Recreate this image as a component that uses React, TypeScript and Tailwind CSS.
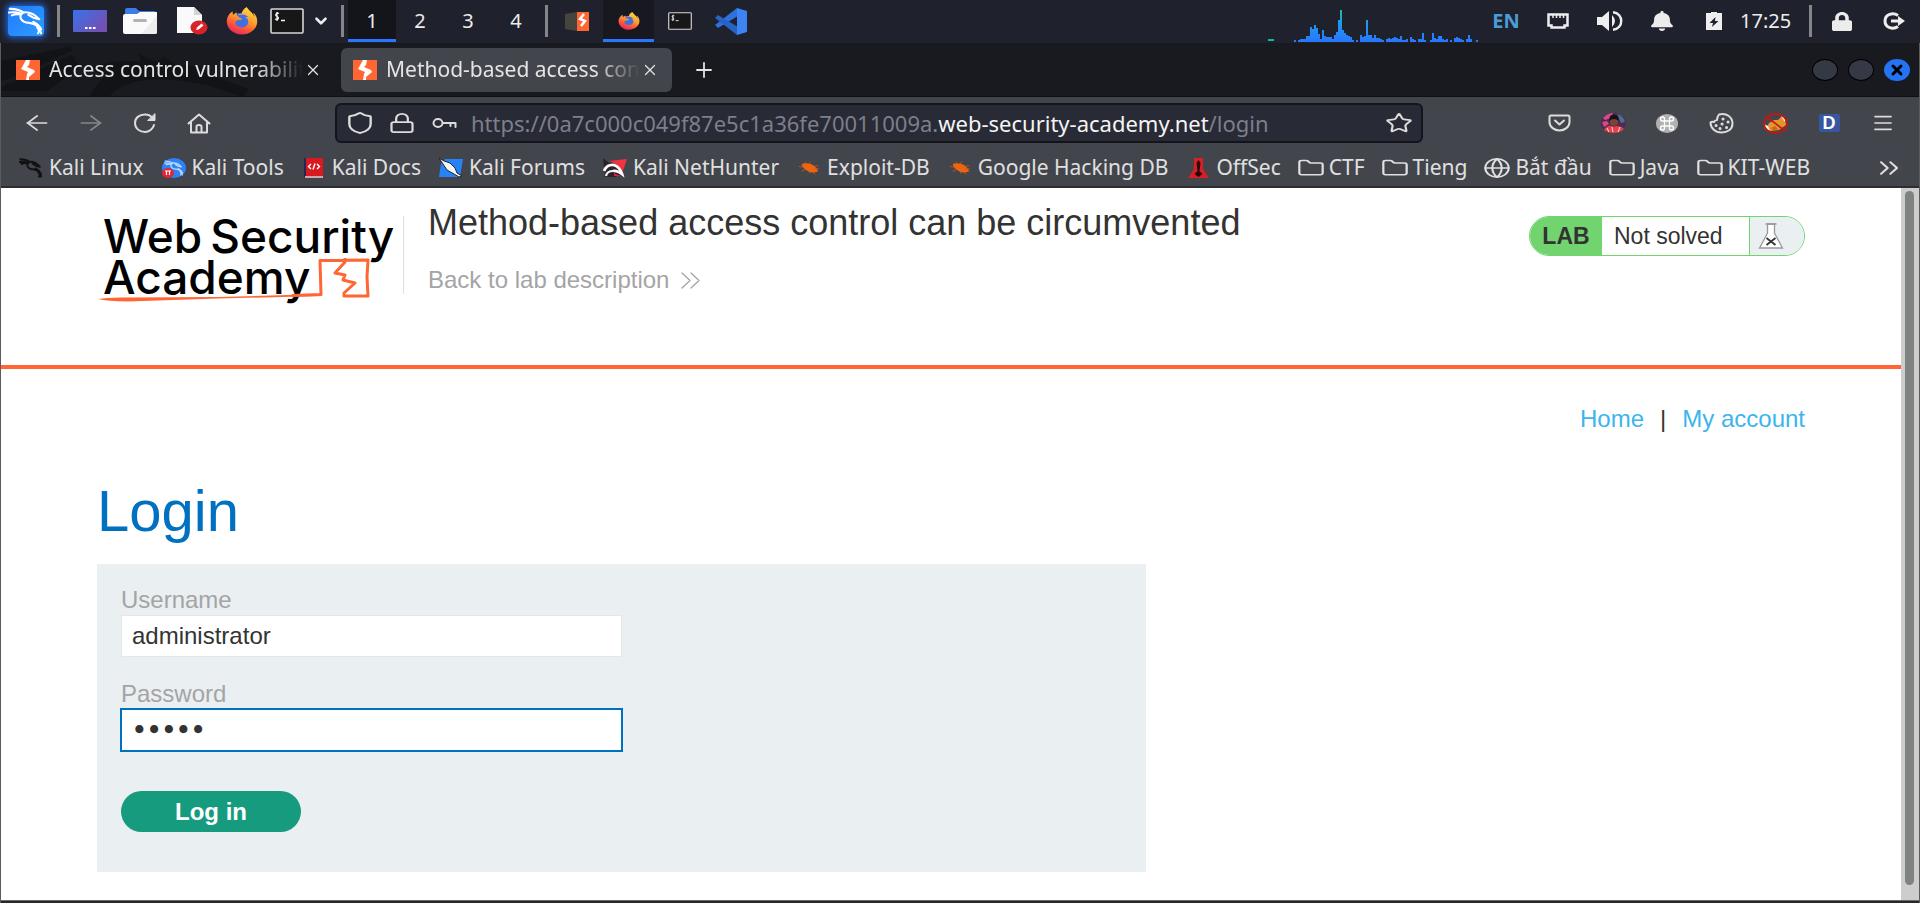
import type { ReactNode } from "react";
import { Shield, Lock, Star, Globe, Folder, ChevronsRight, ChevronDown, ArrowLeft, ArrowRight, Menu, Plus, X } from "lucide-react";
import { FaFirefoxBrowser, FaBell, FaLock } from "react-icons/fa";

const stroke = { fill: "none", stroke: "currentColor", strokeLinecap: "round", strokeLinejoin: "round" } as const;

function Defs() {
  return (
    <svg className="absolute h-0 w-0" aria-hidden="true">
      <defs>
        <linearGradient id="fox" x1="0.8" y1="0" x2="0.3" y2="1">
          <stop offset="0" stopColor="#ffe14a" />
          <stop offset="0.45" stopColor="#ff9a2e" />
          <stop offset="0.75" stopColor="#ff4f3a" />
          <stop offset="1" stopColor="#e02568" />
        </linearGradient>
        <linearGradient id="desk" x1="0" y1="0" x2="1" y2="0.6">
          <stop offset="0" stopColor="#3873e8" />
          <stop offset="1" stopColor="#7350b4" />
        </linearGradient>
        <linearGradient id="cpu" x1="0" y1="0" x2="0" y2="1">
          <stop offset="0" stopColor="#22b8b0" />
          <stop offset="0.4" stopColor="#1e9af0" />
          <stop offset="1" stopColor="#2777ff" />
        </linearGradient>
      </defs>
    </svg>
  );
}

function Firefox({ className }: { className: string }) {
  return (
    <span className={`relative flex items-center justify-center ${className}`}>
      <span className="absolute h-3/5 w-3/5 rounded-full bg-[#3f6fe0]" />
      <FaFirefoxBrowser fill="url(#fox)" preserveAspectRatio="none" className="relative h-full w-full" />
    </span>
  );
}

function Dragon({ className, weight }: { className: string; weight: number }) {
  return (
    <svg viewBox="0 0 37 30" preserveAspectRatio="none" className={className} {...stroke} strokeWidth={weight} aria-hidden="true">
      <path d="M2 2q9 0 14 4-4 2-3 6 2 5 9 5 10 1 12 11" />
      <path d="M1 6q7-1 12 1M4 9q4-2 9-1M15 6q9-2 17 7l-6-1.500-5-3M26 16q6 3 8 8M30 22q3 3 1 6" />
    </svg>
  );
}

function Bolt({ className }: { className: string }) {
  return (
    <svg viewBox="0 0 24 20" preserveAspectRatio="none" className={className} aria-hidden="true">
      <rect width="24" height="20" fill="#ff6633" />
      <path d="M10 0h4l-1 5-2 2 7 3 1 2-6 5v3h-3l1-6 1-2-7-3z" fill="#fff" />
    </svg>
  );
}

function TerminalIcon({ className }: { className: string }) {
  return (
    <svg viewBox="0 0 34 26" preserveAspectRatio="none" className={className} aria-hidden="true">
      <rect x="1" y="1" width="32" height="24" rx="1" fill="#171717" stroke="#d6d6d6" strokeWidth="1.6" />
      <path d="M9 5.500c-3-1-4.500 2-2 3s1.500 4-2 2.500M7 4v9M11 12.500h4" stroke="#f2f2f2" strokeWidth="1.300" fill="none" />
    </svg>
  );
}

const cpuBars = [
  1, 0, 1, 2, 2, 2, 5, 5, 14, 12, 16, 13, 7, 2, 11, 5, 4, 4, 4, 2, 6, 9, 21, 31, 11, 8, 6, 5, 4, 1, 0, 1, 0, 6, 4, 5, 21, 6, 6, 3, 6, 3, 3, 2, 1,
  0, 2, 3, 2, 3, 4, 3, 2, 5, 1, 1, 2, 0, 4, 2, 1, 0, 2, 2, 8, 1, 0, 0, 1, 8, 3, 2, 5, 5, 2, 1, 2, 0, 1, 0, 3, 4, 3, 2, 1, 0, 2, 6, 2, 0, 0, 1,
];

function CpuGraph() {
  return (
    <svg width="213" height="42" viewBox="0 0 213 42" className="shrink-0" aria-hidden="true">
      <rect x="1" y="39" width="6" height="2" fill="#14b79f" />
      <path d={cpuBars.map((h, i) => (h ? `M${27 + i * 2} 42v-${h + 1}h2v${h + 1}z` : "")).join("")} fill="url(#cpu)" />
    </svg>
  );
}

function Slot({ label, className, children }: { label: string; className: string; children: ReactNode }) {
  return (
    <button aria-label={label} className={`flex shrink-0 items-center justify-center ${className}`}>
      {children}
    </button>
  );
}

const Separator = () => <span className="h-8 w-[3px] shrink-0 bg-[#85868a]" />;

function Panel() {
  return (
    <div className="flex h-[43px] shrink-0 items-center bg-[#1f212c] pb-px text-[#ececec]">
      <Slot label="Applications" className="h-full w-[52px]">
        <span className="flex h-[30px] w-9 items-center justify-center rounded-sm bg-gradient-to-br from-[#2478ff] to-[#2d9dff] shadow-[0_0_6px_2px_#1f62d0]">
          <Dragon weight={2.2} className="h-7 w-9 text-white" />
        </span>
      </Slot>
      <div className="flex w-[13px] shrink-0 pl-[5px]"><Separator /></div>
      <Slot label="Show desktop" className="h-full w-[50px]">
        <svg width="34" height="22" viewBox="0 0 34 22" aria-hidden="true">
          <rect width="34" height="22" rx="1" fill="url(#desk)" />
          <path d="M12 18h2.500M16 18h2.500M20 18h2.500" stroke="#fff" strokeWidth="2" />
        </svg>
      </Slot>
      <Slot label="Files" className="h-full w-[50px]">
        <svg width="34" height="26" viewBox="0 0 34 26" aria-hidden="true">
          <path d="M2 2q0-2 2-2h9l3 3h15q2 0 2 2v6H2z" fill="#3b7be8" />
          <path d="M0 8q0-2 2-2h12l3-2h17v20q0 2-2 2H2q-2 0-2-2z" fill="#fafafa" />
          <path d="M34 8 18 26h14q2 0 2-2z" fill="#ededed" />
          <rect x="10" y="11" width="14" height="3" rx="1.500" fill="#b3b3b3" />
        </svg>
      </Slot>
      <Slot label="Text editor" className="h-full w-[54px]">
        <svg width="32" height="28" viewBox="0 0 32 28" aria-hidden="true">
          <path d="M1 0h17l8 8v18H1z" fill="#fafafa" />
          <path d="M18 0v8h8z" fill="#d4d4d4" />
          <ellipse cx="23" cy="20.500" rx="8.500" ry="7" fill="#d8232a" />
          <path d="m20 23 1-2.500 4.500-4 2 2-5 4z" fill="#fff" />
        </svg>
      </Slot>
      <Slot label="Firefox" className="h-full w-[46px]"><Firefox className="h-7 w-8" /></Slot>
      <Slot label="Terminal" className="h-full w-[44px]"><TerminalIcon className="h-[26px] w-[34px]" /></Slot>
      <Slot label="More launchers" className="h-full w-[24px]"><ChevronDown size={18} strokeWidth={3.5} /></Slot>
      <div className="flex w-[15px] shrink-0 pl-[8px]"><Separator /></div>
      <nav aria-label="Workspaces" className="flex h-full font-[Noto_Sans] text-[20px]">
        <button className="h-full w-12 border-b-3 border-[#2777ff] bg-[#14151b] pt-[3px]">1</button>
        <button className="h-full w-12">2</button>
        <button className="h-full w-12">3</button>
        <button className="h-full w-12">4</button>
      </nav>
      <div className="flex w-[13px] shrink-0 pl-[5px]"><Separator /></div>
      <Slot label="Burp Suite" className="h-full w-[50px]">
        <svg width="24" height="19" viewBox="0 0 24 19" className="ml-[-2px]" aria-hidden="true">
          <path d="M0 2 12 0v19L0 17z" fill="#47443f" />
          <path d="M12 0h12v19H12z" fill="#ff6633" />
          <path d="M19 2l-4 5 5 2-4 5" stroke="#fff" strokeWidth="2.500" fill="none" />
        </svg>
      </Slot>
      <Slot label="Firefox window" className="h-full w-[51px] border-b-3 border-[#2777ff] bg-[#181920] pt-[3px]"><Firefox className="h-[18px] w-[22px]" /></Slot>
      <Slot label="Terminal window" className="h-full w-[51px]"><TerminalIcon className="h-[18px] w-6" /></Slot>
      <Slot label="Code window" className="h-full w-[51px]">
        <svg width="33" height="27" viewBox="0 0 33 27" aria-hidden="true">
          <path d="M23 0 1 17l3 3L24 8z" fill="#2c71dd" />
          <path d="M23 27 1 10l3-3 20 12z" fill="#2862c4" />
          <path d="M23 0l10 3v21l-10 3z" fill="#3c83f4" />
        </svg>
      </Slot>
      <div className="flex-1" />
      <CpuGraph />
      <Slot label="Input language" className="h-full w-[52px] font-[Noto_Sans] text-[20px] font-bold text-[#4a9dd6]">EN</Slot>
      <Slot label="Network" className="h-full w-[52px]">
        <svg width="22" height="16" viewBox="0 0 22 16" aria-hidden="true">
          <path d="M1.500 1.500h19v11h-3v2h-13v-2h-3z" fill="none" stroke="#eee" strokeWidth="2.500" />
          <path d="M6 2v3M9.500 2v3M13 2v3M16.500 2v3" stroke="#eee" strokeWidth="1.500" />
        </svg>
      </Slot>
      <Slot label="Volume" className="h-full w-[52px]">
        <svg width="26" height="20" viewBox="0 0 26 20" aria-hidden="true">
          <path d="M0 6h5l7-6v20l-7-6H0z" fill="#eee" />
          <path d="M15 4q6 6 0 12z" fill="#eee" />
          <path d="M16 1.200c11 1 11 16.600 0 17.600" stroke="#eee" strokeWidth="2.400" fill="none" />
        </svg>
      </Slot>
      <Slot label="Notifications" className="h-full w-[52px]"><FaBell preserveAspectRatio="none" className="h-5 w-[22px]" /></Slot>
      <Slot label="Battery" className="h-full w-[52px]">
        <svg width="16" height="18" viewBox="0 0 16 18" aria-hidden="true">
          <path d="M0 1h5V0h6v1h5v17H0z" fill="#eee" />
          <path d="M9.500 5 3.500 11H7l-1 4 6.500-6H9z" fill="#1f212c" />
        </svg>
      </Slot>
      <span className="flex w-[69px] shrink-0 font-[Noto_Sans] text-[20px]">17:25</span>
      <Separator />
      <Slot label="Lock screen" className="h-full w-[60px]"><FaLock preserveAspectRatio="none" className="h-[19px] w-5" /></Slot>
      <Slot label="Log out" className="h-full w-[48px] pr-1">
        <svg width="23" height="18" viewBox="0 0 23 18" aria-hidden="true">
          <path d="M15 3.500C10 0 2 2 2 9s8 9 13 5.500" fill="none" stroke="#eee" strokeWidth="3" />
          <path d="M8 7.500h7V4l7 5-7 5v-3.500H8z" fill="#eee" />
        </svg>
      </Slot>
    </div>
  );
}

function Tab({ title, active = false }: { title: string; active?: boolean }) {
  return (
    <div className={`flex h-11 w-[331px] shrink-0 items-center rounded-md pl-3 ${active ? "bg-[#43454c]" : ""}`}>
      <Bolt className="h-5 w-6 shrink-0" />
      <span className="ml-[9px] w-[254px] overflow-hidden whitespace-nowrap text-[21px] [mask-image:linear-gradient(to_right,#000_82%,transparent)]">{title}</span>
      <button aria-label={`Close ${title}`} className="flex h-6 w-5 items-center justify-center"><X size={18} strokeWidth={1.6} /></button>
    </div>
  );
}

function TabBar() {
  return (
    <div className="relative flex h-[54px] shrink-0 items-center border-b border-[#101115] bg-[#191a1f] text-[#e4e4e4]">
      <svg viewBox="0 0 260 53" className="absolute left-0 top-0 h-[53px] w-[260px]" fill="#121317" aria-hidden="true">
        <path d="M0 18 68 4l4 3-50 24-22 7zM0 44l70-32 10 12-34 24H0zM62 1c10 8 12 20 30 22 18-4 26-6 48-4l-2-8 18 8 6-5 14 8 22 2 22 12 28 10-6 8-36-12c-40-8-80-10-98 12H88c6-10 10-16 18-22-12-2-26-10-44-31z" />
      </svg>
      <div className="relative flex flex-1 items-center gap-[6px] pl-[3px]">
        <Tab title="Access control vulnerabilities" />
        <Tab title="Method-based access control" active />
        <button aria-label="New tab" className="flex w-13 items-center justify-center"><Plus size={24} strokeWidth={1.8} /></button>
      </div>
      <div className="flex gap-[10px] pr-[9px]">
        <button aria-label="Minimize" className="h-[22px] w-[26px] rounded-[50%] border border-black bg-[#353845]" />
        <button aria-label="Maximize" className="h-[22px] w-[26px] rounded-[50%] border border-black bg-[#353845]" />
        <button aria-label="Close window" className="flex h-[22px] w-[26px] items-center justify-center rounded-[50%] bg-[#2573f5] text-black"><X size={16} strokeWidth={4.5} /></button>
      </div>
    </div>
  );
}

function Toolbar() {
  return (
    <div className="flex h-[52px] shrink-0 items-center px-[9px] text-[#dcdcdc]">
      <Slot label="Back" className="h-10 w-[54px]"><ArrowLeft preserveAspectRatio="none" className="h-6 w-8" strokeWidth={1.7} /></Slot>
      <Slot label="Forward" className="h-10 w-[54px] text-[#85868a]"><ArrowRight preserveAspectRatio="none" className="h-6 w-8" strokeWidth={1.7} /></Slot>
      <Slot label="Reload" className="h-10 w-[54px]">
        <svg width="24" height="20" viewBox="0 0 24 20" {...stroke} strokeWidth="2" aria-hidden="true">
          <path d="M21 12c-1 4-5 7-9 7-6 0-10-4-10-9s4-8.500 10-8.500c3 0 5.500 1 7 3" />
          <path d="M22 1v6.500h-7z" fill="currentColor" strokeWidth="1" />
        </svg>
      </Slot>
      <Slot label="Home" className="h-10 w-[54px]">
        <svg width="24" height="21" viewBox="0 0 24 21" {...stroke} strokeWidth="2" aria-hidden="true">
          <path d="M1.500 10.500 12 1.500l10.500 9M4 9v10.500h16V9M9.500 19v-5.500q0-1.500 2.500-1.500t2.500 1.500V19" />
        </svg>
      </Slot>
      <div className="mx-[109px] flex h-10 min-w-0 flex-1 items-center rounded-md border-2 border-[#14151b] bg-[#282a36] pl-[7px] pr-2">
        <Shield preserveAspectRatio="none" className="h-6 w-8 shrink-0" strokeWidth={1.8} />
        <Lock preserveAspectRatio="none" className="ml-3 h-[22px] w-7 shrink-0" strokeWidth={1.9} />
        <svg width="25" height="14" viewBox="0 0 25 14" className="ml-4 shrink-0" {...stroke} strokeWidth="2" aria-hidden="true">
          <ellipse cx="6" cy="7" rx="4.500" ry="4" />
          <path d="M11 7h12.500v4M18.500 7v3" />
        </svg>
        <div className="ml-[14px] min-w-0 flex-1 truncate text-[22px] text-[#7d7f89]">
          https://0a7c000c049f87e5c1a36fe70011009a.<span className="text-[#f4f4f4]">web-security-academy.net</span>/login
        </div>
        <button aria-label="Bookmark this page" className="shrink-0"><Star preserveAspectRatio="none" className="h-[22px] w-7" strokeWidth={1.9} /></button>
      </div>
      <Slot label="Pocket" className="h-10 w-[54px]">
        <svg width="23" height="18" viewBox="0 0 23 18" {...stroke} strokeWidth="2" aria-hidden="true">
          <path d="M3 1.500h17q1.500 0 1.500 1.500v5c0 5-5 8.500-10 8.500s-10-3.500-10-8.500V3q0-1.500 1.500-1.500zM7 6.500l4.500 4 4.500-4" />
        </svg>
      </Slot>
      <Slot label="Profile" className="h-10 w-[54px]">
        <svg width="25" height="20" viewBox="0 0 25 20" aria-hidden="true">
          <ellipse cx="12.500" cy="10" rx="12.500" ry="10" fill="#4c2a55" />
          <path d="M2 5q5-5 10-5l-2 5-6 2zM1 9l5-1 2 3-5 3z" fill="#d64a86" />
          <path d="M16 1q7 2 8 8l-4 1z" fill="#4a6f8f" />
          <ellipse cx="13" cy="9" rx="4" ry="4" fill="#7a4436" />
          <path d="M8 8q5-4 10 0l-1-5q-4-3-8 0z" fill="#1c1116" />
          <path d="M3 17q3-5 8-4l2 1 2-1q6 0 8 3-4 4-10 4T3 17z" fill="#e8404a" />
          <path d="M6 15l2 4M11 14l1 5M19 14l-2 5" stroke="#ffd9dc" />
        </svg>
      </Slot>
      <Slot label="Shortcuts extension" className="h-10 w-[54px]">
        <svg width="22" height="19" viewBox="0 0 22 19" aria-hidden="true">
          <ellipse cx="11" cy="9.500" rx="11" ry="9.500" fill="#b1b1b1" />
          <path d="M8.500 7h5v5h-5zM8.500 7H6.500A2 2 0 1 1 8.500 5zM13.500 7V5a2 2 0 1 1 2 2zM13.500 12h2a2 2 0 1 1-2 2zM8.500 12v2a2 2 0 1 1-2-2z" fill="none" stroke="#fff" strokeWidth="1.300" />
        </svg>
      </Slot>
      <Slot label="Cookie editor" className="h-10 w-[54px]">
        <svg width="25" height="21" viewBox="0 0 25 21" {...stroke} strokeWidth="2" aria-hidden="true">
          <path d="M10 1.500c8-2 13.500 3 13.500 9s-5 9-11 9-11-4-11-10q1-1 3.500-.5 1-2 3-2 0-3 2-5.500z" />
          <path d="M14 6h.1M19 9h.1M17.500 14.500h.1M7 12.500h.1M13 11h.1M11 15.500h.1" strokeWidth="3" />
        </svg>
      </Slot>
      <Slot label="Proxy switcher" className="h-10 w-[54px]">
        <svg width="25" height="21" viewBox="0 0 25 21" aria-hidden="true">
          <path d="M3 16 6 10l5-3h4l3-3 4 1 1 7-7 5-9 1z" fill="#e8942c" />
          <path d="M18 3l4 1v5zM1 11l4 2 2 5-5-2z" fill="#fff" />
          <path d="M8 15l4-2 3 3-4 2z" fill="#c9690f" />
          <ellipse cx="12.500" cy="10.500" rx="11.500" ry="9.500" fill="none" stroke="#c01818" strokeWidth="1.800" />
          <path d="M4 4l17 13" stroke="#c01818" strokeWidth="1.600" />
        </svg>
      </Slot>
      <Slot label="D extension" className="h-10 w-[54px]">
        <span className="flex h-[18px] w-[21px] items-center justify-center rounded-xs bg-[#37579e] font-[Liberation_Sans] text-[18px] font-bold leading-none text-white">D</span>
      </Slot>
      <Slot label="Menu" className="h-10 w-[54px]"><Menu preserveAspectRatio="none" className="h-[22px] w-6" strokeWidth={1.8} /></Slot>
    </div>
  );
}

const bug = (
  <svg width="22" height="16" viewBox="0 0 24 20" preserveAspectRatio="none" aria-hidden="true">
    <path d="M4 5q5-2 10 0 6 3 8 9-6 3-11 0-6-3-7-9z" fill="#ee6511" />
    <path d="M8 5V2M12 5l2-3M6 9l-5-1M8 12l-4 2M17 8l5-1M18 11l5 0M12 14l1 3M16 15l3 3" stroke="#c6571a" strokeWidth="1" />
  </svg>
);
const folder = <Folder preserveAspectRatio="none" className="h-5 w-7 shrink-0" strokeWidth={1.9} />;

const bookmarks: { label: string; icon: ReactNode }[] = [
  { label: "Kali Linux", icon: <Dragon weight={3} className="h-5 w-6 text-[#111114]" /> },
  {
    label: "Kali Tools",
    icon: (
      <span className="relative flex h-5 w-6 items-center justify-center rounded-[50%] bg-[#2b83f6]">
        <Dragon weight={2.4} className="h-4 w-5 text-[#b9d6ff]" />
        <svg width="12" height="10" viewBox="0 0 12 10" className="absolute bottom-0 left-0" aria-hidden="true">
          <ellipse cx="6" cy="5" rx="6" ry="5" fill="#e32636" />
          <path d="M3 3h6M4.500 3v4M7.500 3v4" stroke="#fff" strokeWidth="1.200" />
        </svg>
      </span>
    ),
  },
  {
    label: "Kali Docs",
    icon: (
      <svg width="20" height="20" viewBox="0 0 20 20" aria-hidden="true">
        <path d="M0 0h4v20H0z" fill="#22284f" />
        <path d="M2 0h17v18H2z" fill="#d91920" />
        <path d="M1 18h18v2H1z" fill="#c9a9a9" />
        <path d="M7 6 4.500 8.500 7 11M13 6l2.500 2.500L13 11M11 5.500 9 11.500" stroke="#fff" strokeWidth="1.400" fill="none" />
      </svg>
    ),
  },
  {
    label: "Kali Forums",
    icon: (
      <svg width="24" height="20" viewBox="0 0 24 20" aria-hidden="true">
        <path d="M6 1h18l-3 18H0L2 6z" fill="#2583f7" />
        <path d="M0 0l5 3 6 2 5 5 2 5 5 3-3 1-5-3-7-4-4-6z" fill="#f5f5f5" stroke="#15171c" strokeWidth="0.900" />
      </svg>
    ),
  },
  {
    label: "Kali NetHunter",
    icon: (
      <svg width="24" height="20" viewBox="0 0 24 20" aria-hidden="true">
        <path d="M0 0l6 5 6-1 6 12-6 3H2z" fill="#2a2228" />
        <path d="M6 3 24 1l-4 12-3-3-6-5z" fill="#f0333c" />
        <path d="M11 15l6 3h-6z" fill="#e01f4c" />
        <path d="M1 13q3-7 10-6 6 2 8 9-5-4-9-3" fill="none" stroke="#fff" strokeWidth="2.800" />
        <path d="M3 18q1-5 7-5" fill="none" stroke="#f4f4f4" strokeWidth="2.200" />
      </svg>
    ),
  },
  { label: "Exploit-DB", icon: bug },
  { label: "Google Hacking DB", icon: bug },
  {
    label: "OffSec",
    icon: (
      <svg width="21" height="20" viewBox="0 0 21 20" aria-hidden="true">
        <path d="M6 0h9v11l6 9H0l6-9z" fill="#d81e26" />
        <path d="M10.500 2l2 3-1 8 3 3-4 3-4-3 3-3-1-8z" fill="#2a0608" />
      </svg>
    ),
  },
  { label: "CTF", icon: folder },
  { label: "Tieng", icon: folder },
  { label: "Bắt đầu", icon: <Globe preserveAspectRatio="none" className="h-[22px] w-7 shrink-0" strokeWidth={1.8} /> },
  { label: "Java", icon: folder },
  { label: "KIT-WEB", icon: folder },
];

function BookmarksBar() {
  return (
    <div className="flex h-[39px] shrink-0 items-center border-b-2 border-[#2c2d31] pl-[18px] pr-[14px] text-[21px] text-[#e0e0e0]">
      <div className="flex min-w-0 flex-1 items-center gap-[18px]">
        {bookmarks.map((b) => (
          <a key={b.label} href="#" className="flex shrink-0 items-center gap-[6px] whitespace-nowrap">
            <span className="flex w-6 shrink-0 items-center justify-center">{b.icon}</span>
            {b.label}
          </a>
        ))}
      </div>
      <button aria-label="More bookmarks"><ChevronsRight preserveAspectRatio="none" className="h-7 w-8" strokeWidth={1.6} /></button>
    </div>
  );
}

function AcademyLogo() {
  return (
    <a href="#" aria-label="Web Security Academy" className="relative block w-[307px] shrink-0 border-r border-[#dedede]">
      <div className="pl-[6px] font-[Inter] text-[46px] font-medium leading-[41px] text-black">
        <div className="flex gap-2">
          <span>Web</span>
          <span>Security</span>
        </div>
        <div>Academy</div>
      </div>
      <svg width="300" height="90" viewBox="0 0 300 90" className="absolute left-0 top-0" fill="none" stroke="#ff6633" aria-hidden="true">
        <path d="M1 83q10-2 30-1.500l90-.5 103-3V80l-103 2.500-90 3Q10 85 1 83z" fill="#ff6633" stroke="none" />
        <path d="M195 79.500l29-1-1-34 48-.5-1 17 1 19h-24v-3l11-10-12-3 2-5-10-2 10-11v-4" strokeWidth="3" strokeLinejoin="round" />
      </svg>
    </a>
  );
}

function LabBadge() {
  return (
    <div className="flex h-10 w-[276px] shrink-0 overflow-hidden rounded-full border border-[#72d46f] text-[23px]">
      <span className="flex w-[72px] items-center justify-center bg-[#72d46f] font-bold text-[#333332]">LAB</span>
      <span className="flex flex-1 items-center border-r border-[#72d46f] pl-3">Not solved</span>
      <span className="flex w-[54px] items-center bg-[#eaeff2] pl-2">
        <svg width="26" height="26" viewBox="0 0 26 26" aria-hidden="true">
          <path d="M9.500 1v9L1.500 25h23l-8-15V1z" fill="#fff" stroke="#999" strokeWidth="1.300" />
          <path d="M7.500 1h11" stroke="#999" strokeWidth="1.500" />
          <path d="M8.500 15l9 7M17.500 15l-9 7" stroke="#333332" strokeWidth="1.800" />
        </svg>
      </span>
    </div>
  );
}

function LabPage() {
  return (
    <div className="flex flex-1 bg-white font-[Liberation_Sans] text-[#333332]">
      <main className="min-w-0 flex-1">
        <header className="flex h-[181px] border-b-4 border-[#ff6633] px-24 pt-4">
          <div className="mt-3 flex h-[78px]"><AcademyLogo /></div>
          <div className="ml-6 flex-1">
            <h1 className="text-[36px] leading-[38px]">Method-based access control can be circumvented</h1>
            <a href="#" className="mt-6 flex items-center gap-3 text-[24px] leading-7 text-[#a4a4a6]">
              Back to lab description
              <svg width="20" height="17" viewBox="0 0 20 17" {...stroke} strokeWidth="1.300" aria-hidden="true">
                <path d="M1 1l8 7.500L1 16M10 1l8 7.500L10 16" />
              </svg>
            </a>
          </div>
          <div className="mt-3"><LabBadge /></div>
        </header>
        <div className="px-24">
          <nav className="flex justify-end gap-4 pt-9 text-[24px] leading-7">
            <a href="#" className="text-[#3bb5ec]">Home</a>
            <span>|</span>
            <a href="#" className="text-[#3bb5ec]">My account</a>
          </nav>
          <h1 className="mt-[46px] text-[58px] leading-[64px] text-[#0071c1]">Login</h1>
          <form className="mb-7 mt-[21px] w-[1049px] max-w-full bg-[#eaeff2] px-6 pb-10 pt-[21px] text-[24px]" onSubmit={(e) => e.preventDefault()}>
            <label htmlFor="username" className="block leading-[30px] text-[#a4a4a6]">Username</label>
            <input id="username" defaultValue="administrator" className="block h-[42px] w-1/2 border border-[#e4e6e7] bg-white px-[10px] outline-none" />
            <label htmlFor="password" className="mt-[22px] block leading-[30px] text-[#a4a4a6]">Password</label>
            <input id="password" type="password" defaultValue="peter" className="block h-[42px] w-1/2 bg-white px-[11px] font-[DejaVu_Sans] text-[23px] font-bold outline-2 -outline-offset-1 outline-[#0071c1]" />
            <button type="submit" className="mt-10 block h-[41px] w-[180px] rounded-full bg-[#179b7f] font-bold text-white">Log in</button>
          </form>
        </div>
      </main>
      <div className="flex w-[18px] flex-col bg-[#cdcdcd] px-[4px] pb-[15px] pt-[3px]" aria-hidden="true">
        <div className="w-[9px] flex-1 rounded-full bg-[#7e8382]" />
      </div>
    </div>
  );
}

export default function App() {
  return (
    <div className="flex min-h-screen flex-col bg-[#1f212c]">
      <Defs />
      <Panel />
      <div className="flex flex-1 flex-col border-x border-[#5c5c5e] font-[Noto_Sans]">
        <TabBar />
        <div className="bg-[#43454c]">
          <Toolbar />
          <BookmarksBar />
        </div>
        <LabPage />
        <div className="h-1 border-t border-[#6a6a6a] bg-[#262728]" />
      </div>
    </div>
  );
}
